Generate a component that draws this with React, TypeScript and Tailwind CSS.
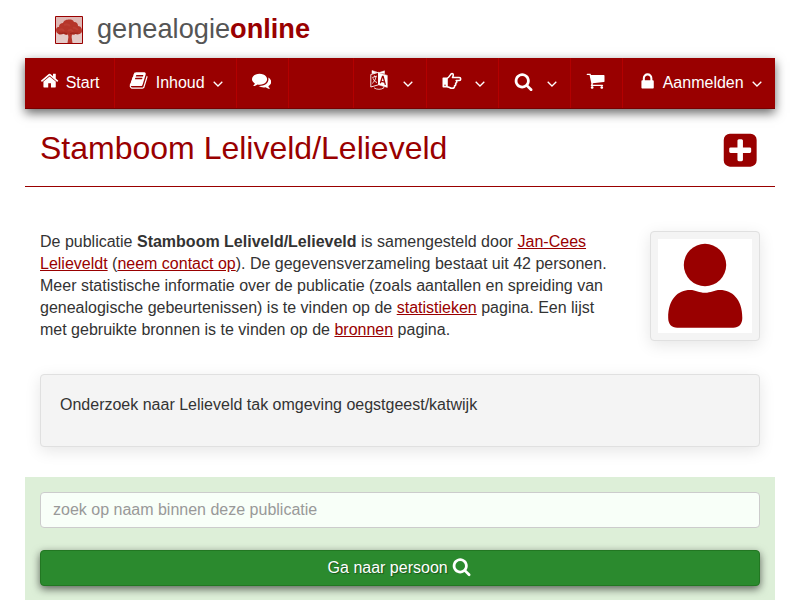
import type { ReactNode } from "react";
import clsx from "clsx";

const PATHS = {
  home: "M1472 992v480q0 26-19 45t-45 19h-384v-384h-256v384h-384q-26 0-45-19t-19-45v-480q0-1 .5-3t.5-3l575-474 575 474q1 2 1 6zm223-69l-62 74q-8 9-21 11h-3q-13 0-21-7l-692-577-692 577q-12 8-24 7-13-2-21-11l-62-74q-8-10-7-23.5t11-21.5l719-599q32-26 76-26t76 26l244 204v-195q0-14 9-23t23-9h192q14 0 23 9t9 23v408l219 182q10 8 11 21.5t-7 23.5z",
  book: "M1703 478q40 57 18 129l-275 906q-19 64-76.5 107.5t-122.5 43.5h-923q-77 0-148.5-53.5t-99.5-131.5q-24-67-2-127 0-4 3-27t4-37q1-8-3-21.5t-3-19.5q2-11 8-21t16.5-23.5 16.5-23.5q23-38 45-91.5t30-91.5q3-10 .5-30t-.5-28q3-11 17-28t17-23q21-36 42-92t25-90q1-9-2.5-32t.5-28q4-13 22-30.5t22-22.5q19-26 42.5-84.5t27.5-96.5q1-8-3-25.5t-2-26.5q2-8 9-18t18-23 17-21q8-12 16.5-30.5t15-35 16-36 19.5-32 26.5-23.5 36-11.5 47.5 5.5l-1 3q38-9 51-9h761q74 0 114 56t18 130l-274 906q-36 119-71.5 153.5t-128.5 34.5h-869q-27 0-38 15-11 16-1 43 24 70 144 70h923q29 0 56-15.5t35-41.5l300-987q7-22 5-57 38 15 59 43zm-1064 2q-4 13 2 22.5t20 9.5h608q13 0 25.5-9.5t16.5-22.5l21-64q4-13-2-22.5t-20-9.5h-608q-13 0-25.5 9.5t-16.5 22.5zm-83 256q-4 13 2 22.5t20 9.5h608q13 0 25.5-9.5t16.5-22.5l21-64q4-13-2-22.5t-20-9.5h-608q-13 0-25.5 9.5t-16.5 22.5z",
  comments:
    "M1408 768q0 139-94 257t-256.5 186.5-353.5 68.5q-86 0-176-16-124 88-278 128-36 9-86 16h-3q-11 0-20.5-8t-11.5-21q-1-3-1-6.5t.5-6.5 2-6l2.5-5 3.5-5.5 4-5 4.5-5 4-4.5q5-6 23-25t26-29.5 22.5-29 25-38.5 20.5-44q-124-72-195-177t-71-224q0-139 94-257t256.5-186.5 353.5-68.5 353.5 68.5 256.5 186.5 94 257zm384 256q0 120-71 224.5t-195 176.5q10 24 20.5 44t25 38.5 22.5 29 26 29.5 23 25q1 1 4 4.5t4.5 5 4 5 3.5 5.5l2.5 5 2 6 .5 6.5-1 6.5q-3 14-13 22t-22 7q-50-7-86-16-154-40-278-128-90 16-176 16-271 0-472-132 58 4 88 4 161 0 309-45t264-129q125-92 192-212t67-254q0-77-23-152 129 71 204 178t75 230z",
  search:
    "M1216 832q0-185-131.5-316.5t-316.5-131.5-316.5 131.5-131.5 316.5 131.5 316.5 316.5 131.5 316.5-131.5 131.5-316.5zm512 832q0 52-38 90t-90 38q-54 0-90-38l-343-342q-179 124-399 124-143 0-273.5-55.5t-225-150-150-225-55.5-273.5 55.5-273.5 150-225 225-150 273.5-55.5 273.5 55.5 225 150 150 225 55.5 273.5q0 220-124 399l343 343q37 37 37 90z",
  cart: "M704 1536q0 52-38 90t-90 38-90-38-38-90 38-90 90-38 90 38 38 90zm896 0q0 52-38 90t-90 38-90-38-38-90 38-90 90-38 90 38 38 90zm128-1088v512q0 24-16.5 42.5t-40.5 21.5l-1044 122q13 60 13 70 0 16-24 64h920q26 0 45 19t19 45-19 45-45 19h-1024q-26 0-45-19t-19-45q0-11 8-31.5t16-36 21.5-40 15.5-29.5l-177-823h-204q-26 0-45-19t-19-45 19-45 45-19h256q16 0 28.5 6.5t19.5 15.5 13 24.5 8 26 5.5 29.5 4.5 26h1201q26 0 45 19t19 45z",
  lock: "M640 768h512v-192q0-106-75-181t-181-75-181 75-75 181v192zm832 96v576q0 40-28 68t-68 28h-960q-40 0-68-28t-28-68v-576q0-40 28-68t68-28h32v-192q0-184 132-316t316-132 316 132 132 316v192h32q40 0 68 28t28 68z",
  plus: "M1408 960v-128q0-26-19-45t-45-19h-320v-320q0-26-19-45t-45-19h-128q-26 0-45 19t-19 45v320h-320q-26 0-45 19t-19 45v128q0 26 19 45t45 19h320v320q0 26 19 45t45 19h128q26 0 45-19t19-45v-320h320q26 0 45-19t19-45zm256-544v960q0 119-84.5 203.5t-203.5 84.5h-960q-119 0-203.5-84.5t-84.5-203.5v-960q0-119 84.5-203.5t203.5-84.5h960q119 0 203.5 84.5t84.5 203.5z",
};

function Icon({ name, className }: { name: keyof typeof PATHS; className?: string }) {
  return (
    <svg viewBox="0 0 1792 1792" fill="currentColor" className={clsx("shrink-0", className ?? "size-[19.2px]")}>
      <path d={PATHS[name]} />
    </svg>
  );
}

function Chevron({ className }: { className?: string }) {
  return (
    <svg viewBox="0 0 10 6" fill="none" stroke="currentColor" strokeWidth="1.3" className={clsx("mt-[3px] h-1.5 w-2.5 shrink-0", className)}>
      <path d="M.7.7 5 5 9.3.7" />
    </svg>
  );
}

function HandIcon() {
  return (
    <svg viewBox="0 0 20 18" fill="none" stroke="currentColor" strokeWidth="1.6" strokeLinejoin="round" className="-mt-[3px] h-[18px] w-5 shrink-0">
      <path d="M5 6.2c2.200 0 3.300-4.700 5-4.700 1.800 0 1.400 2.300.5 4h6.700c2 0 2 3 0 3h-3c1 1 .7 2.500-.6 2.800.5 1.200 0 2.300-1 2.500.1 1.500-.6 2.500-2.600 2.500C8 16.300 7 14.800 5 14.800" />
      <path d="M1.300 6.200H5v8.600H1.300z" fill="currentColor" />
      <circle cx="3" cy="13.200" r=".7" fill="#900" stroke="none" />
    </svg>
  );
}

function LanguageIcon() {
  return (
    <svg viewBox="0 0 18 20" fill="none" stroke="currentColor" className="-mt-[5px] h-5 w-[18px] shrink-0">
      <path d="M.8 4.500 8.500 2.300v12.500L.8 17z" strokeWidth=".9" />
      <path d="M2 3.500V.5l5 1.700zM8.500 2.800l6-2v3" fill="currentColor" strokeWidth=".5" />
      <path d="m8.500 2.800 8.800 2.600v12l-8.800-2.600z" fill="currentColor" strokeWidth=".5" />
      <path d="m10.300 13.300 2.200-6.800h.6l2.300 8.300M11.200 11.300l3.300.9" stroke="#900" strokeWidth="1.300" />
      <path d="m2.300 7.500 4.600-1.400M4.600 5.500v1.200M6 6.700c-.5 3-2 5.500-3.700 6.600M3 8.300c.8 2.200 2.200 3.500 4 4.200" strokeWidth=".9" />
      <path d="M4 17.800c2.500 2 7.500 2 9.500.1M13 16.700l1 .9-1 1" strokeWidth=".8" />
    </svg>
  );
}

function TreeLogo() {
  return (
    <svg viewBox="0 0 28 28" className="size-7 shrink-0">
      <path d="M.5.5h27v27H.5z" fill="#dfb8b5" stroke="#900" />
      <path d="M1 17h26v10H1z" fill="#e4c9c7" />
      <path
        d="M1.500 16c-1-3 0-5 2.500-5 0-3 2-4 4-4 1-3 4-3.500 6-3.500 3 0 4 .5 5 2.500 3 0 4 2 4 4 3 0 4.500 3 3.800 6-1 2-4 3-6.500 2-1 1-2.500 1-3.300.5l-.4 2.500.9 6h-5l.9-6-.4-2.500c-2 1-4 0-4-1-3 2-6.500 1-7.500-1.500z"
        fill="#b5352a"
      />
      <path d="M4 14c2-1 4-.5 5 1m0-6c3-1.500 5 0 6 1m3 2c2-1 4 1 5 2m-10 1c2-2 4-1 5 1" fill="none" stroke="#bb3e33" strokeWidth="2" />
      <path d="M4 17c3 .8 5-.5 8 .5m3 0c3-1 6 .5 8-.5" fill="none" stroke="#9c241c" strokeWidth="1.200" />
    </svg>
  );
}

function NavItem({ className, children }: { className: string; children?: ReactNode }) {
  return (
    <li className={clsx("flex h-full items-center border-r border-[#b30000] pb-px", className)}>
      {children}
    </li>
  );
}

function Link({ children }: { children: ReactNode }) {
  return (
    <a href="#" className="text-[#900] underline">
      {children}
    </a>
  );
}

export default function App() {
  return (
    <div className="h-[600px] overflow-hidden bg-white px-[25px] font-['Liberation_Sans',Arial,sans-serif] text-base leading-[22px] text-[#333]">
      <header className="flex h-[58px] items-center pl-[30px] pt-0.5">
        <TreeLogo />
        <span className="ml-3.5 -mt-0.5 text-[27.2px] leading-8 text-[#555]">
          genealogie<b className="text-[#900]">online</b>
        </span>
      </header>

      <nav className="h-[51px] border-b border-[#700] bg-[#900] text-white shadow-[0_4px_10px_rgba(0,0,0,0.6)]">
        <ul className="flex h-full">
          <NavItem className="w-[90px] pl-[14.5px]">
            <Icon name="home" className="-mt-[3px] size-[19.2px]" />
            <span className="ml-[7px]">Start</span>
          </NavItem>
          <NavItem className="w-[122px] pl-[14px]">
            <Icon name="book" className="-mt-[3px] size-[19.2px]" />
            <span className="ml-[7.5px]">Inhoud</span>
            <Chevron className="ml-2" />
          </NavItem>
          <NavItem className="w-[52px] pl-[15px]">
            <Icon name="comments" className="-mt-[3px] size-[19.2px]" />
          </NavItem>
          <NavItem className="w-[65px]" />
          <NavItem className="w-[73px] pl-4">
            <LanguageIcon />
            <Chevron className="ml-[15px]" />
          </NavItem>
          <NavItem className="w-[72px] pl-[15px]">
            <HandIcon />
            <Chevron className="ml-[13px]" />
          </NavItem>
          <NavItem className="w-[72px] pl-[14.5px]">
            <Icon name="search" className="-mt-0.5 size-[19.2px]" />
            <Chevron className="ml-[14.5px]" />
          </NavItem>
          <NavItem className="w-[52px] pl-[14.5px]">
            <Icon name="cart" className="-mt-[3px] size-[19.2px]" />
          </NavItem>
          <NavItem className="w-[152px] border-r-0 pl-[14.5px]">
            <Icon name="lock" className="-mt-0.5 size-[19.2px]" />
            <span className="ml-1.5">Aanmelden</span>
            <Chevron className="ml-2" />
          </NavItem>
        </ul>
      </nav>

      <div className="flex h-[78px] items-center justify-between border-b border-[#900] pl-[15px] pr-4">
        <h1 className="text-[32px] leading-9 text-[#900]">Stamboom Leliveld/Lelieveld</h1>
        <Icon name="plus" className="mt-1.5 size-[38.4px] text-[#900]" />
      </div>

      <main className="px-[15px] pt-11">
        <div className="flex items-start justify-between">
          <p className="w-[580px]">
            De publicatie <b>Stamboom Leliveld/Lelieveld</b> is samengesteld door <Link>Jan-Cees Lelieveldt</Link> (
            <Link>neem contact op</Link>). De gegevensverzameling bestaat uit 42 personen. Meer statistische informatie
            over de publicatie (zoals aantallen en spreiding van genealogische gebeurtenissen) is te vinden op de{" "}
            <Link>statistieken</Link> pagina. Een lijst met gebruikte bronnen is te vinden op de <Link>bronnen</Link>{" "}
            pagina.
          </p>
          <div className="rounded border border-[#e0e0e0] bg-[#f4f4f4] p-[7px] shadow-[0_4px_16px_rgba(0,0,0,0.1)]">
            <svg viewBox="0 0 94 94" className="size-[94px] bg-white" fill="#900">
              <circle cx="47" cy="26" r="21.200" />
              <path d="M10.200 79C10.200 60 20 51 32 51c6 0 9 2.800 15 2.800S56 51 62 51c12 0 22.300 9 22.300 28 0 6-3.500 9.800-9 9.800H19.200c-5.500 0-9-3.800-9-9.800z" />
            </svg>
          </div>
        </div>

        <section className="mt-[33px] h-[73px] rounded border border-[#e0e0e0] bg-[#f4f4f4] px-[19px] py-[19px] shadow-[0_4px_16px_rgba(0,0,0,0.1)]">
          Onderzoek naar Lelieveld tak omgeving oegstgeest/katwijk
        </section>
      </main>

      <form className="mt-[30px] h-[123px] bg-[#ddefd8] px-[15px] pt-[15px]">
        <input
          type="text"
          placeholder="zoek op naam binnen deze publicatie"
          className="block h-9 w-full rounded border border-[#ccc] bg-[#f8fff8] px-3 placeholder:text-[#999]"
        />
        <button
          type="button"
          className="mt-[22px] flex h-9 w-full items-center justify-center gap-[4.5px] rounded border border-[#227722] bg-[#2b8a2e] pr-px text-white shadow-[0_3px_8px_rgba(0,0,0,0.6)] text-shadow-[1px_1px_1px_rgba(0,0,0,0.4)]"
        >
          Ga naar persoon
          <Icon name="search" className="-mt-0.5 size-[19.2px]" />
        </button>
      </form>
    </div>
  );
}
